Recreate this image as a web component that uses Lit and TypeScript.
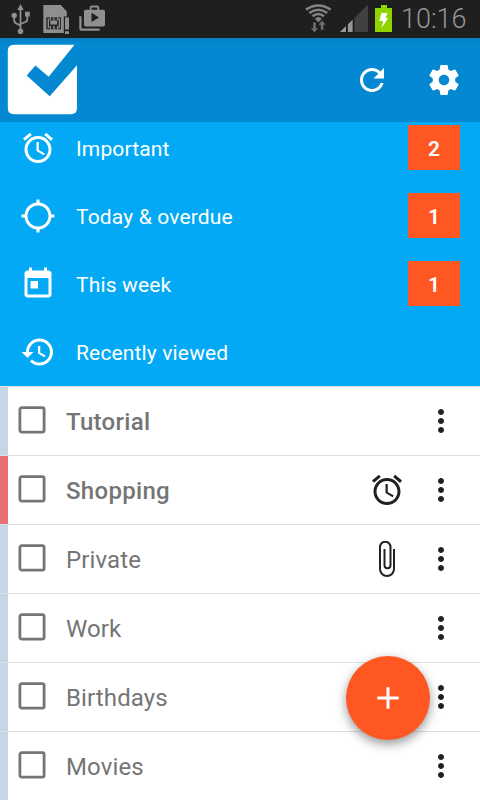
import { LitElement, html, svg, css, nothing } from "lit";
import { customElement, property } from "lit/decorators.js";

const paths: Record<string, string> = {
  alarm:
    "M22 5.72l-4.6-3.86-1.29 1.53 4.6 3.86L22 5.72zM7.88 3.39L6.6 1.86 2 5.71l1.29 1.53 4.59-3.85zM12.5 8H11v6l4.75 2.85.75-1.23-4-2.37V8zM12 4c-4.97 0-9 4.03-9 9s4.02 9 9 9c4.97 0 9-4.03 9-9s-4.03-9-9-9zm0 16c-3.87 0-7-3.13-7-7s3.13-7 7-7 7 3.13 7 7-3.13 7-7 7z",
  target:
    "M20.94 11c-.46-4.17-3.77-7.48-7.94-7.94V1h-2v2.06C6.83 3.52 3.52 6.83 3.06 11H1v2h2.06c.46 4.17 3.77 7.48 7.94 7.94V23h2v-2.06c4.17-.46 7.48-3.77 7.94-7.94H23v-2h-2.06zM12 19c-3.87 0-7-3.13-7-7s3.13-7 7-7 7 3.13 7 7-3.13 7-7 7z",
  today:
    "M19 3h-1V1h-2v2H8V1H6v2H5c-1.11 0-1.99.9-1.99 2L3 19c0 1.1.89 2 2 2h14c1.1 0 2-.9 2-2V5c0-1.1-.9-2-2-2zm0 16H5V8h14v11zM7 10h5v5H7z",
  history:
    "M13 3c-4.97 0-9 4.03-9 9H1l3.89 3.89.07.14L9 12H6c0-3.87 3.13-7 7-7s7 3.13 7 7-3.13 7-7 7c-1.93 0-3.68-.79-4.94-2.06l-1.42 1.42C8.27 19.99 10.51 21 13 21c4.97 0 9-4.03 9-9s-4.03-9-9-9zm-1 5v5l4.28 2.54.72-1.21-3.5-2.08V8H12z",
  refresh:
    "M17.65 6.35C16.2 4.9 14.21 4 12 4c-4.42 0-7.99 3.58-7.99 8s3.57 8 7.99 8c3.73 0 6.84-2.55 7.73-6h-2.08c-.82 2.33-3.04 4-5.65 4-3.31 0-6-2.69-6-6s2.69-6 6-6c1.66 0 3.14.69 4.22 1.78L13 11h7V4l-2.35 2.35z",
  gear:
    "M19.43 12.98c.04-.32.07-.64.07-.98s-.03-.66-.07-.98l2.11-1.65c.19-.15.24-.42.12-.64l-2-3.46c-.12-.22-.39-.3-.61-.22l-2.49 1c-.52-.4-1.08-.73-1.69-.98l-.38-2.65C14.46 2.18 14.25 2 14 2h-4c-.25 0-.46.18-.49.42l-.38 2.65c-.61.25-1.17.59-1.69.98l-2.49-1c-.23-.09-.49 0-.61.22l-2 3.46c-.13.22-.07.49.12.64l2.11 1.65c-.04.32-.07.65-.07.98s.03.66.07.98l-2.11 1.65c-.19.15-.24.42-.12.64l2 3.46c.12.22.39.3.61.22l2.49-1c.52.4 1.08.73 1.69.98l.38 2.65c.03.24.24.42.49.42h4c.25 0 .46-.18.49-.42l.38-2.65c.61-.25 1.17-.59 1.69-.98l2.49 1c.23.09.49 0 .61-.22l2-3.46c.12-.22.07-.49-.12-.64l-2.11-1.65zM12 15.5c-1.93 0-3.5-1.57-3.5-3.5s1.57-3.5 3.5-3.5 3.5 1.57 3.5 3.5-1.57 3.5-3.5 3.5z",
  more:
    "M12 8c1.1 0 2-.9 2-2s-.9-2-2-2-2 .9-2 2 .9 2 2 2zm0 2c-1.1 0-2 .9-2 2s.9 2 2 2 2-.9 2-2-.9-2-2-2zm0 6c-1.1 0-2 .9-2 2s.9 2 2 2 2-.9 2-2-.9-2-2-2z",
};

const icon = (name: string) => html`
  <svg width="36" height="36" viewBox="0 0 24 24" fill="currentColor">
    ${svg`<path d=${paths[name]} />`}
  </svg>
`;

const clip = html`
  <svg width="36" height="36" viewBox="0 0 36 36" fill="none" stroke="currentColor" stroke-width="2">
    <path d="M25 8V28a7 7 0 0 1-14 0V6a5 5 0 0 1 10.500 0V24.300a3 3 0 0 1-6 0V8" />
  </svg>
`;

@customElement("status-bar")
export class StatusBar extends LitElement {
  static styles = css`
    :host {
      display: flex;
      align-items: center;
      height: 38px;
      background: #1f1f1f;
      color: #969696;
    }
    .icons { display: block; flex: none; }
    .spacer { flex: 1; }
    .time {
      width: 67px;
      margin: 0 12px 0 9px;
      font: 300 27px/38px Roboto, sans-serif;
      white-space: nowrap;
    }
  `;

  render() {
    return html`
      <svg class="icons" width="110" height="38" viewBox="0 0 110 38" fill="#8f8f8f">
        <path d="M20.500 4l3.200 6h-6.400z" />
        <circle cx="20.500" cy="31.300" r="2.800" />
        <path d="M20.500 9v20M14.200 17v3.200q0 2.500 2.500 3.400l3.800 2M27.300 15v4.500q0 1.800-2 2.500l-4.800 2" fill="none" stroke="#8f8f8f" stroke-width="1.800" />
        <circle cx="14.200" cy="15.500" r="2.700" />
        <path d="M25 11.700h4.800v4.800H25z" />
        <path d="M43.300 5h17.500l6 6.500v5h-3v16.500H43.300z" />
        <path d="M46.300 17.300h14.700v12H46.300z" fill="#262626" />
        <path d="M49.700 17.300h1.300v3h-1.300zM53.300 17.300h1.300v3h-1.300zM57 17.300h1.300v3H57zM49.700 26h1.300v3.300h-1.300zM53.300 26h1.300v3.300h-1.300zM57 26h1.300v3.300H57zM47.700 18.500h1.300v9.500h-1.300zM58.700 18.500H60v9.500h-1.300zM50.300 20.500h6.700v4h-6.700z" />
        <path d="M65 17.500h4v12h-4zM65 31.300h4v2.700h-4z" />
        <path d="M79.300 16.200h2.200v12.300h18.200v2.300H81.300q-2 0-2-2z" />
        <path d="M84 11.300q0-1.500 1.500-1.500h4.200V7.500q0-2 2-2h5.500q2 0 2 2v2.300h4.300q1.500 0 1.500 1.500v13.500q0 1.700-1.700 1.700H85.700Q84 26.500 84 24.800zM91.500 9.800h5.800V7.500h-5.800z M91.500 12.700V22.100L99 17.500z" fill-rule="evenodd" />
      </svg>
      <div class="spacer"></div>
      <svg class="icons" width="92" height="38" viewBox="300 0 92 38">
        <g fill="none" stroke="#838383" stroke-width="2.500">
          <path d="M306 9.600Q318.300 1.400 330.600 9.600" />
          <path d="M309.300 13Q318.300 6.500 327.300 13" />
          <path d="M312.500 16.200Q318.300 11.700 324.100 16.200" />
        </g>
        <path d="M314.800 18.700Q318.300 15.300 321.800 18.700L318.300 22.200z" fill="#838383" />
        <path d="M313.200 22.500h2.600v5.800h2.400l-3.700 3.900-3.700-3.900h2.400zM320.800 29.800h2.600v-5h2.300l-3.600-4.200-3.600 4.200h2.300z" fill="#6e6e6e" />
        <path d="M340 32L368 4.700V32z" fill="#414141" />
        <path d="M340 32l6-5.900V32z" fill="#999" />
        <path d="M348 32v-7.700l4.800-4.700V32z" fill="#969696" />
        <path d="M346 32v-6l1.400-1.300V32zM352.800 32V19.600l1.500-1.400V32z" fill="#161616" />
        <path d="M375 8h6V5h6v3h6v24h-18z" fill="#8fd300" />
        <path d="M381.500 13h6l-2 5.300h2.700l-6.700 9.800 1.700-7h-3.900z" fill="#fff" />
      </svg>
      <div class="time">10:16</div>
    `;
  }
}

@customElement("tool-bar")
export class ToolBar extends LitElement {
  static styles = css`
    :host {
      display: flex;
      align-items: center;
      height: 84px;
      box-sizing: border-box;
      padding: 0 18px 0 7px;
      gap: 36px;
      color: #fff;
      background: linear-gradient(#0a7fbe 0, #0388d1 5px);
    }
    svg { display: block; }
    .logo { margin-right: auto; }
  `;

  render() {
    return html`
      <svg class="logo" width="71" height="72" viewBox="7 44 71 72" fill="#fff">
        <path d="M14 44.800H74.500L48.700 76.700 35.400 65.400 26.700 75.500 49.700 96.300 77 65.300V108q0 6.200-6.200 6.200H14q-6.200 0-6.200-6.200V51q0-6.200 6.200-6.200z" />
      </svg>
      ${icon("refresh")} ${icon("gear")}
    `;
  }
}

@customElement("filter-row")
export class FilterRow extends LitElement {
  @property() icon = "";
  @property() label = "";
  @property({ type: Number }) count = 0;

  static styles = css`
    :host {
      display: flex;
      align-items: center;
      height: 68px;
      box-sizing: border-box;
      padding: 0 20px;
      color: #fff;
      font-family: Roboto, sans-serif;
    }
    svg { display: block; flex: none; }
    .label {
      flex: 1;
      padding: 1px 0 0 20px;
      font-size: 21px;
      line-height: 28px;
      letter-spacing: 0.15px;
    }
    .badge {
      width: 52px;
      height: 45px;
      margin-bottom: 1px;
      background: #ff5722;
      font-size: 21px;
      font-weight: 600;
      line-height: 48px;
      text-align: center;
    }
  `;

  render() {
    return html`
      ${icon(this.icon)}
      <div class="label">${this.label}</div>
      ${this.count ? html`<div class="badge">${this.count}</div>` : nothing}
    `;
  }
}

@customElement("task-row")
export class TaskRow extends LitElement {
  @property() label = "";
  @property() mark = "";
  @property({ type: Boolean, reflect: true }) strong = false;
  @property({ type: Boolean, reflect: true }) urgent = false;

  static styles = css`
    :host {
      display: flex;
      align-items: center;
      height: 69px;
      box-sizing: border-box;
      border-bottom: 1px solid #e0e0e0;
      color: #212121;
      background: #fff;
      font-family: Roboto, sans-serif;
    }
    .stripe { align-self: stretch; width: 8px; background: #c5d6e6; }
    :host([urgent]) .stripe { background: #ea6f73; }
    svg { display: block; flex: none; }
    .check { margin: 0 20px 2px 10px; color: #757575; }
    .label {
      flex: 1;
      padding-top: 2px;
      font-size: 24px;
      line-height: 32px;
      letter-spacing: 0.12px;
      color: #757575;
    }
    :host([strong]) .label { font-weight: 500; letter-spacing: 0.3px; }
    .more { margin: 0 21px 0 18px; }
  `;

  render() {
    return html`
      <div class="stripe"></div>
      <svg class="check" width="28" height="28" fill="none" stroke="currentColor" stroke-width="2.800">
        <rect x="1.900" y="1.700" width="24.200" height="24.400" rx="1.900" />
      </svg>
      <div class="label">${this.label}</div>
      ${this.mark === "alarm" ? icon("alarm") : this.mark === "clip" ? clip : nothing}
      <div class="more">${icon("more")}</div>
    `;
  }
}

@customElement("app-root")
export class AppRoot extends LitElement {
  static styles = css`
    :host {
      display: block;
      position: relative;
      width: 480px;
      height: 800px;
      overflow: hidden;
      background: #fff;
    }
    .filters {
      display: flex;
      flex-direction: column;
      justify-content: flex-end;
      height: 264px;
      overflow: hidden;
      background: #03a9f4;
    }
    .filters filter-row { flex: none; }
    .tasks { border-top: 1px solid #e0e0e0; }
    .fab {
      position: absolute;
      left: 346px;
      top: 656px;
      width: 84px;
      height: 84px;
      border-radius: 50%;
      background: #ff5722;
      box-shadow: 0 4px 8px rgba(0, 0, 0, 0.28), 0 4px 14px rgba(0, 0, 0, 0.16);
    }
    .fab svg { display: block; }
  `;

  render() {
    return html`
      <status-bar></status-bar>
      <tool-bar></tool-bar>
      <div class="filters">
        <filter-row icon="alarm" label="Important" count="2"></filter-row>
        <filter-row icon="target" label="Today &amp; overdue" count="1"></filter-row>
        <filter-row icon="today" label="This week" count="1"></filter-row>
        <filter-row icon="history" label="Recently viewed"></filter-row>
      </div>
      <div class="tasks">
        <task-row label="Tutorial" strong></task-row>
        <task-row label="Shopping" strong urgent mark="alarm"></task-row>
        <task-row label="Private" mark="clip"></task-row>
        <task-row label="Work"></task-row>
        <task-row label="Birthdays"></task-row>
        <task-row label="Movies"></task-row>
      </div>
      <div class="fab">
        <svg width="84" height="84" viewBox="0 0 84 84" fill="none" stroke="#fff" stroke-width="3">
          <path d="M42 31.300v21.400M31.300 42h21.400" />
        </svg>
      </div>
    `;
  }
}
